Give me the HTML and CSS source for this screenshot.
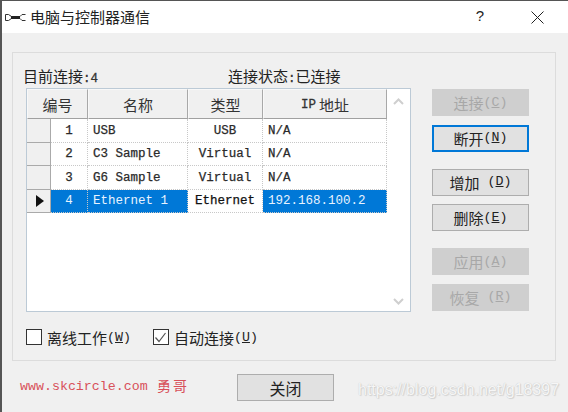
FILE: index.html
```html
<!DOCTYPE html>
<html lang="zh">
<head>
<meta charset="utf-8">
<title>电脑与控制器通信</title>
<link rel="stylesheet" href="styles.css">
</head>
<body>
<div class="window">
  <header class="titlebar">
    <svg class="app-icon" width="21" height="9" viewBox="0 0 21 9">
      <path d="M.5 1.500h3l3 2M.5 7.500h3l3-2M.5 1.500v6M20.500 1.500h-3.500l-2 2M20.500 7.500h-3.500l-2-2" fill="none" stroke="#333" stroke-width="1"/>
      <rect x="6" y="3" width="9" height="3" fill="#222"/>
    </svg>
    <span class="title">电脑与控制器通信</span>
    <span class="help">?</span>
    <svg class="close-x" width="13" height="13" viewBox="0 0 13 13"><path d="M.5.5l12 12M12.5.5l-12 12" stroke="#222" fill="none"/></svg>
  </header>
  <main class="content">
    <section class="group">
      <div class="status">
        <span class="status-left">目前连接<i class="mono">:4</i></span>
        <span class="status-right">连接状态<i class="mono">:</i>已连接</span>
      </div>
      <div class="panel">
        <div class="table-area">
          <div class="grid-box">
            <div class="gridwrap">
              <div class="row head">
                <div class="hc c-no">编号</div>
                <div class="hc c-name">名称</div>
                <div class="hc c-type">类型</div>
                <div class="hc c-ip"><i class="mono">IP</i>地址</div>
              </div>
              <div class="row">
                <div class="rh"></div><div class="td c-num">1</div><div class="td c-name mono">USB</div><div class="td c-type mono ctr">USB</div><div class="td c-ip mono">N/A</div>
              </div>
              <div class="row">
                <div class="rh"></div><div class="td c-num">2</div><div class="td c-name mono">C3 Sample</div><div class="td c-type mono ctr">Virtual</div><div class="td c-ip mono">N/A</div>
              </div>
              <div class="row">
                <div class="rh"></div><div class="td c-num">3</div><div class="td c-name mono">G6 Sample</div><div class="td c-type mono ctr">Virtual</div><div class="td c-ip mono">N/A</div>
              </div>
              <div class="row sel">
                <div class="rh"><span class="arrow"></span></div><div class="td c-num">4</div><div class="td c-name mono">Ethernet 1</div><div class="td c-type mono ctr cur">Ethernet</div><div class="td c-ip mono">192.168.100.2</div>
              </div>
            </div>
            <div class="scroll">
              <svg width="11" height="7" viewBox="0 0 11 7"><path d="M1 6l4.500-4.500L10 6" fill="none" stroke="#cfcfcf" stroke-width="2"/></svg>
              <svg width="11" height="7" viewBox="0 0 11 7"><path d="M1 1l4.500 4.500L10 1" fill="none" stroke="#cfcfcf" stroke-width="2"/></svg>
            </div>
          </div>
          <div class="checks">
            <label class="check"><span class="box"></span>离线工作<i class="mono acc">(<u>W</u>)</i></label>
            <label class="check"><span class="box"><svg width="13" height="13" viewBox="0 0 13 13"><path d="M1.500 6.500l3.500 4 6.500-8.500" fill="none" stroke="#555" stroke-width="1.200"/></svg></span>自动连接<i class="mono acc">(<u>U</u>)</i></label>
          </div>
        </div>
        <div class="actions">
          <button class="btn off">连接<i class="mono acc">(<u>C</u>)</i></button>
          <button class="btn focus">断开<i class="mono acc">(<u>N</u>)</i></button>
          <button class="btn gap1">增加<i class="mono acc wide">(<u>D</u>)</i></button>
          <button class="btn">删除<i class="mono acc">(<u>E</u>)</i></button>
          <button class="btn off gap1">应用<i class="mono acc">(<u>A</u>)</i></button>
          <button class="btn off">恢复<i class="mono acc wide">(<u>R</u>)</i></button>
        </div>
      </div>
    </section>
    <footer class="foot">
      <span class="site mono">www.skcircle.com</span>
      <span class="brother">勇哥</span>
      <button class="btn closebtn">关闭</button>
      <span class="mark">https://blog.csdn.net/g18397</span>
    </footer>
  </main>
</div>
</body>
</html>
```
FILE: styles.css
```css
* { box-sizing: border-box; }
html, body { margin: 0; padding: 0; }
body {
  width: 568px; height: 412px; overflow: hidden;
  font-family: "Noto Sans CJK SC", "Liberation Sans", sans-serif;
  color: #1a1a1a; background: #f0f0f0;
}
i { font-style: normal; }
.mono { font-family: "Liberation Mono", "Noto Sans CJK SC", monospace; }
.window {
  width: 568px; height: 412px; display: flex; flex-direction: column;
  border: 1px solid #555; border-width: 1px 0 0 2px; overflow: hidden;
}
.titlebar {
  height: 32px; flex: none; background: #fff; display: flex; align-items: center;
  padding-left: 3px; font-size: 15px; color: #222;
}
.app-icon { flex: none; margin-right: 4px; }
.title { flex: 1; line-height: 20px; }
.help { font-family: "Liberation Sans", sans-serif; font-size: 15px; margin: -4px 47px 0 0; }
.close-x { margin-right: 24px; }
.content { flex: 1; padding: 19px 11px 0 10px; display: flex; flex-direction: column; }
.group {
  height: 309px; flex: none; border: 1px solid #dcdcdc; padding: 9px 0 0 13px;
  width: 544px;
}
.status { height: 26px; display: flex; font-size: 15px; align-items: center; margin-left: -3px; color: #222; }
.status .mono { font-size: 12.500px; color: #333; -webkit-text-stroke: .3px #333; }
.status-left { width: 205px; }
.panel { display: flex; }
.table-area { width: 384px; }
.grid-box {
  height: 224px; width: 385px; background: #fff; display: flex;
  border: 1px solid #bccad6;
}
.gridwrap { width: 360px; flex: none; }
.row { display: flex; height: 23.500px; font-size: 12.500px; }
.row.head { height: 30px; }
.hc {
  background: #f0f0f0; border: 1px solid; border-color: #f8f8f8 #a8a8a8 #a0a0a0 #f8f8f8;
  display: flex; align-items: center; justify-content: center; font-size: 15px; color: #333;
}
.hc .mono { font-size: 12.500px; margin: 2px 3px 0 0; -webkit-text-stroke: .3px #333; }
.c-no { width: 61px; }
.c-name { width: 100px; }
.c-type { width: 75px; }
.c-ip { width: 124px; flex: none; }
.rh {
  width: 24px; background: #f0f0f0; flex: none; position: relative;
  border-right: 1px solid #aaa; border-bottom: 1px solid #aaa;
}
.arrow {
  position: absolute; left: 9px; top: 5px; width: 0; height: 0;
  border-left: 8px solid #111; border-top: 6px solid transparent; border-bottom: 6px solid transparent;
}
.td {
  border-right: 1px dotted #c8c8c8; border-bottom: 1px dotted #c8c8c8;
  display: flex; align-items: center; padding: 1px 0 0 5px; white-space: nowrap;
  color: #2a2a2a; -webkit-text-stroke: .25px #2a2a2a;
}
.c-num { width: 37px; flex: none; justify-content: center; font-family: "Liberation Mono", monospace; padding-left: 0; }
.td.c-name { flex: none; }
.td.c-type { flex: none; }
.ctr { justify-content: center; padding-left: 0; }
.row.sel .td { background: #0078d7; color: #e8f3ff; -webkit-text-stroke: 0; }
.row.sel .td.cur { background: #fff; color: #111; -webkit-text-stroke: .25px #111; }
.scroll {
  flex: 1; display: flex; flex-direction: column; justify-content: space-between;
  align-items: center; padding: 9px 0 6px; background: #fff;
}
.checks { display: flex; gap: 22px; margin-top: 15px; font-size: 15px; height: 20px; align-items: center; color: #222; }
.check { display: flex; align-items: center; }
.box {
  width: 16px; height: 16px; border: 1px solid #333; background: #fff; margin-right: 5px;
  display: flex; align-items: center; justify-content: center;
}
.acc { font-size: 13.300px; }
.wide { margin-left: 8px; }
.actions { display: flex; flex-direction: column; margin-left: 22px; width: 97px; padding-top: 1px; }
.btn {
  width: 97px; height: 27px; background: #e1e1e1; border: 1px solid #adadad;
  font: 15px "Noto Sans CJK SC", sans-serif; color: #222; padding: 0;
  display: flex; align-items: center; justify-content: center; margin-bottom: 8.500px; line-height: 1;
}
.btn.focus { border: 2px solid #0078d7; margin-bottom: 17px; }
.btn.off { background: #cfcfcf; border-color: #cfcfcf; color: #a8a8a8; }
.btn.off.gap1 { margin-top: 8.500px; }
.foot { flex: 1; display: flex; align-items: center; position: relative; padding: 0 0 0 8px; }
.site { color: #d8505a; font-size: 13.300px; width: 137px; margin-top: -1px; }
.brother { color: #d8505a; font-size: 14px; letter-spacing: 2px; width: 80px; margin-top: -4px; }
.closebtn { margin: 2px 0 0 0; font-size: 16px; }
.mark {
  position: absolute; left: 346px; top: 20px; font: 16px "Liberation Sans", sans-serif;
  color: #f6f6f6; text-shadow: 0 0 1px #bbb, 1px 1px 1px #d4d4d4; white-space: nowrap;
}
```
